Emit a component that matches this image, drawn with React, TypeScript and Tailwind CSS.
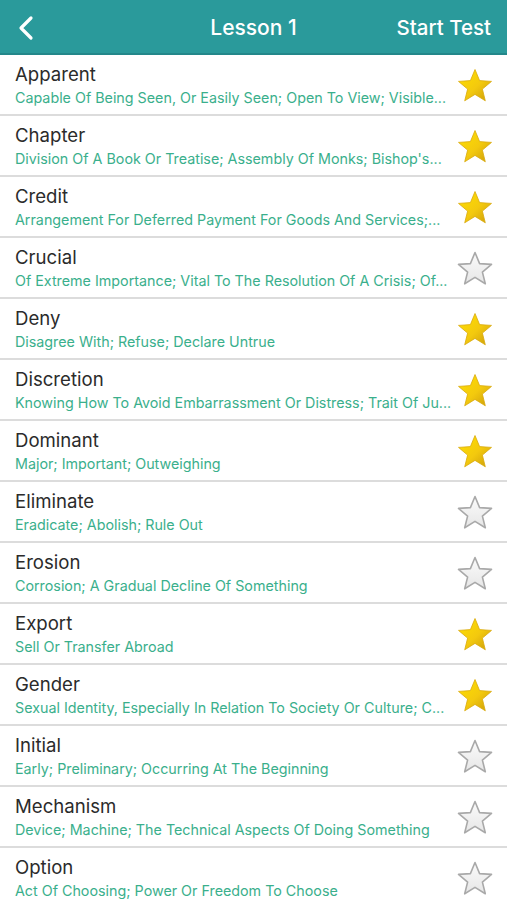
import React from "react";

const rows: { t: string; d: string; s: boolean }[] = [
  { t: "Apparent", d: "Capable Of Being Seen, Or Easily Seen; Open To View; Visible...", s: true },
  { t: "Chapter", d: "Division Of A Book Or Treatise; Assembly Of Monks; Bishop's...", s: true },
  { t: "Credit", d: "Arrangement For Deferred Payment For Goods And Services;...", s: true },
  { t: "Crucial", d: "Of Extreme Importance; Vital To The Resolution Of A Crisis; Of...", s: false },
  { t: "Deny", d: "Disagree With; Refuse; Declare Untrue", s: true },
  { t: "Discretion", d: "Knowing How To Avoid Embarrassment Or Distress; Trait Of Ju...", s: true },
  { t: "Dominant", d: "Major; Important; Outweighing", s: true },
  { t: "Eliminate", d: "Eradicate; Abolish; Rule Out", s: false },
  { t: "Erosion", d: "Corrosion; A Gradual Decline Of Something", s: false },
  { t: "Export", d: "Sell Or Transfer Abroad", s: true },
  { t: "Gender", d: "Sexual Identity, Especially In Relation To Society Or Culture; C...", s: true },
  { t: "Initial", d: "Early; Preliminary; Occurring At The Beginning", s: false },
  { t: "Mechanism", d: "Device; Machine; The Technical Aspects Of Doing Something", s: false },
  { t: "Option", d: "Act Of Choosing; Power Or Freedom To Choose", s: false },
];

const STAR = "M18 1.5 L22.6 12.6 L34.5 13.4 L25.4 21.1 L28.3 32.8 L18 26.4 L7.7 32.8 L10.6 21.1 L1.5 13.4 L13.4 12.6 Z";

function Star({ on, id }: { on: boolean; id: number }) {
  return (
    <svg width="36" height="35" viewBox="0 0 36 35">
      <defs>
        <linearGradient id={`g${id}`} x1="0" y1="0" x2="1" y2="1">
          <stop offset="0" stopColor="#ffe000" />
          <stop offset="0.55" stopColor="#f3c90e" />
          <stop offset="1" stopColor="#c99a0a" />
        </linearGradient>
        <linearGradient id={`w${id}`} x1="0" y1="0" x2="0" y2="1">
          <stop offset="0" stopColor="#fbfbfb" />
          <stop offset="1" stopColor="#e6e6e6" />
        </linearGradient>
      </defs>
      {on ? (
        <path d={STAR} fill={`url(#g${id})`} stroke="#d9a90c" strokeWidth="0.8" strokeLinejoin="round" />
      ) : (
        <path d={STAR} fill={`url(#w${id})`} stroke="#a9a9a9" strokeWidth="1.6" strokeLinejoin="round" />
      )}
    </svg>
  );
}

export default function App() {
  return (
    <div className="w-[507px] h-[900px] overflow-hidden bg-white" style={{ fontFamily: "Inter, 'Open Sans', sans-serif" }}>
      <div className="relative h-[55px] bg-[#2a9a9b] border-b-2 border-[#23878a] flex items-center justify-between px-[14px] text-white">
        <svg width="20" height="26" viewBox="0 0 20 26" className="ml-[2px] mt-[2px]">
          <path d="M15 3 L5 13 L15 23" fill="none" stroke="white" strokeWidth="3.2" strokeLinecap="round" strokeLinejoin="round" />
        </svg>
        <div className="absolute left-0 right-0 text-center pointer-events-none text-[21px] font-medium mt-[3px]">Lesson 1</div>
        <div className="text-[20.5px] font-medium mr-[2px] mt-[3px]">Start Test</div>
      </div>
      {rows.map((r, i) => (
        <div key={i} className="h-[61px] border-b-2 border-[#dcdcdc] flex items-center pl-[15px] pr-[12px]">
          <div className="flex-1 min-w-0 pt-[1px]">
            <div className="text-[18.6px] leading-[24px] text-[#2b2b2b]">{r.t}</div>
            <div className="text-[14.3px] leading-[21px] mt-[1px] text-[#3aaf8c] whitespace-nowrap">{r.d}</div>
          </div>
          <div className="w-[40px] flex-none flex justify-center mt-[1px]">
            <Star on={r.s} id={i} />
          </div>
        </div>
      ))}
    </div>
  );
}
